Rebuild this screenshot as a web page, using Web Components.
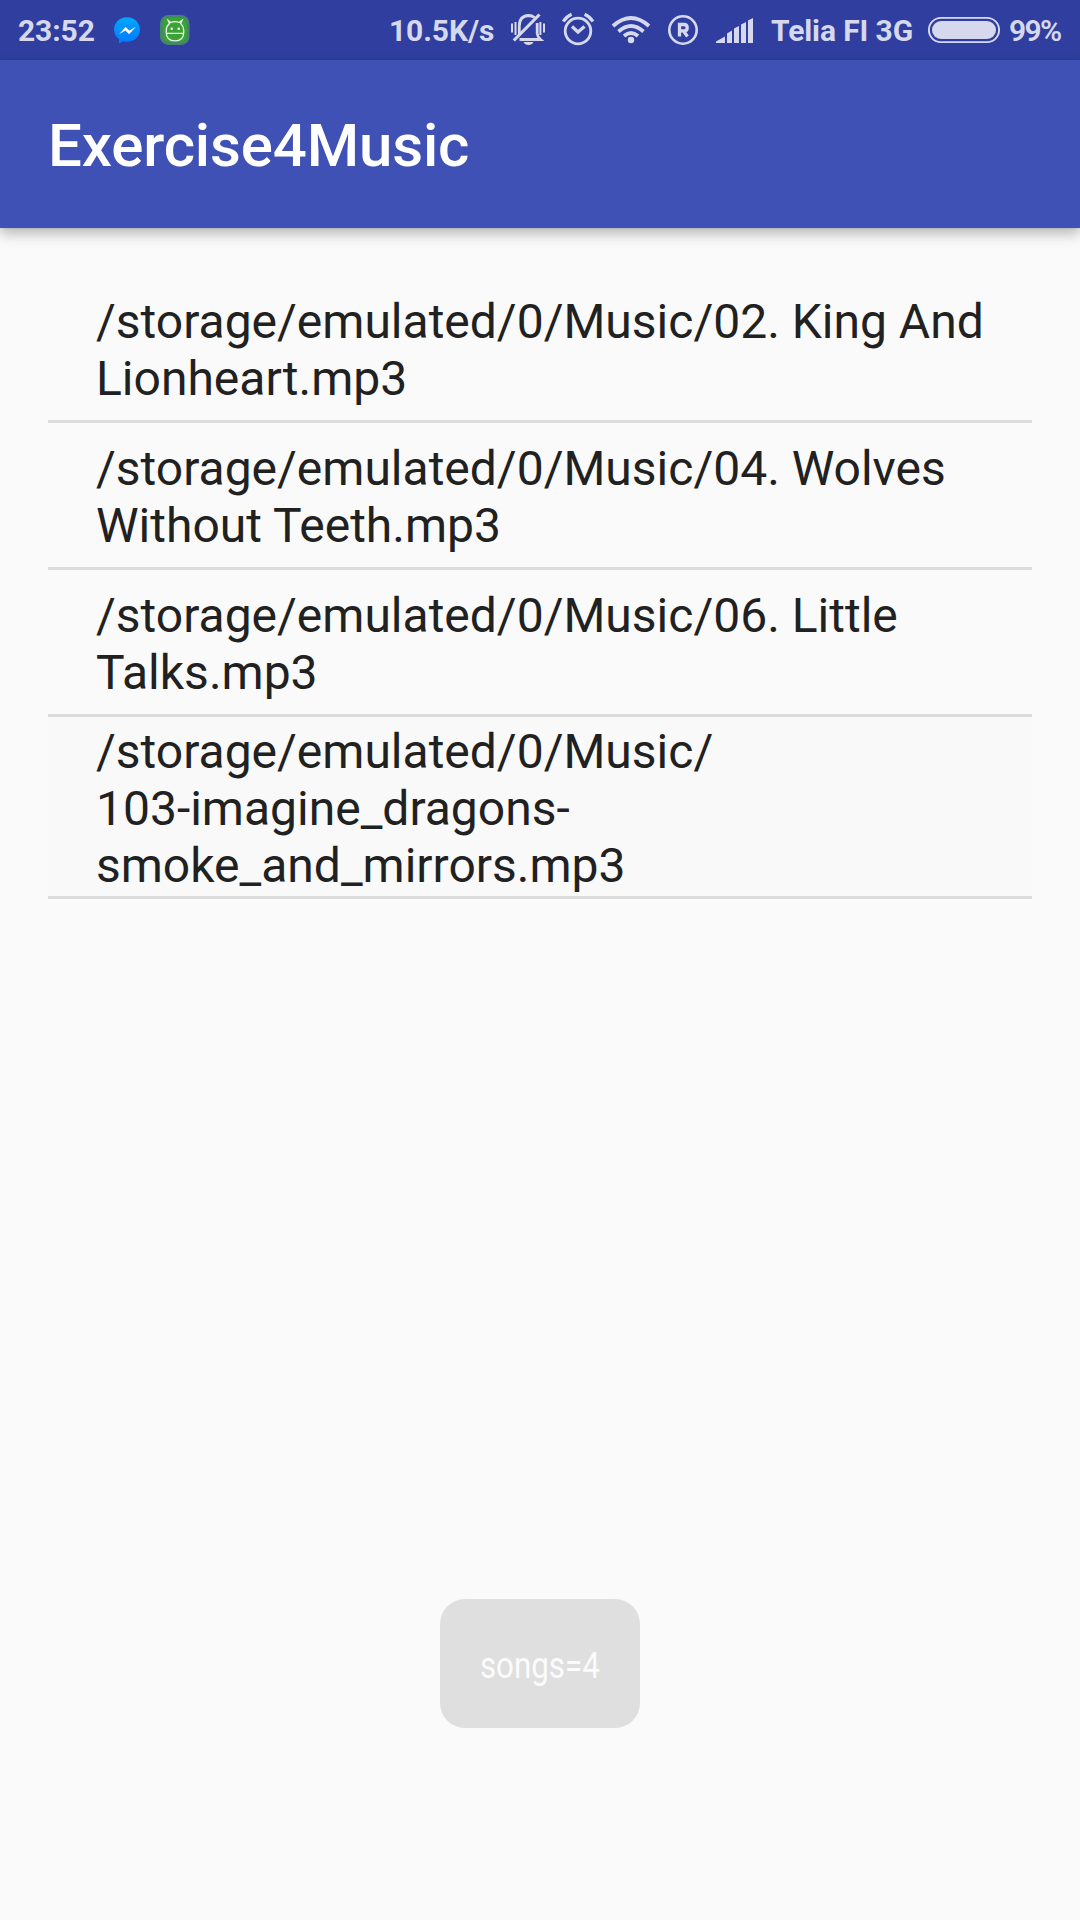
<!DOCTYPE html>
<html lang="en">
<head>
<meta charset="utf-8">
<title>Exercise4Music</title>
<style>
html,body{margin:0;height:100%;background:#fafafa;font-family:Roboto,"Liberation Sans",sans-serif}
</style>
</head>
<body>
<music-app></music-app>
<script>
const define = (name, html) => {
  const t = document.createElement('template');
  t.innerHTML = html;
  customElements.define(name, class extends HTMLElement {
    constructor() {
      super();
      this.attachShadow({mode: 'open'}).append(t.content.cloneNode(true));
    }
  });
};

define('status-text', `<style>
:host{display:block;flex:none;padding-top:1px;font-size:30px;line-height:36px;font-weight:700;letter-spacing:-.1px;white-space:nowrap;color:#d6d9ee}
</style><slot></slot>`);

define('status-icon', `<style>
:host{display:block;flex:none;height:60px;color:#d6d9ee}
::slotted(svg){display:block;height:60px}
</style><slot></slot>`);

define('status-bar', `<style>
:host{display:flex;height:60px;background:#303f9f;align-items:center;box-sizing:border-box;overflow:hidden}
.w1{width:94px;margin-left:18px}.w2{width:107px;margin-left:auto}.w3{width:155px}.w4{width:71px;font-weight:600;letter-spacing:-1.7px}
</style>
<status-text class="w1">23:52</status-text>
<status-icon><svg width="48" height="60" viewBox="112 0 48 60">
 <defs><linearGradient id="m" x1="0" y1="0" x2="0" y2="1"><stop offset="0" stop-color="#00a8ff"/><stop offset="1" stop-color="#0078ff"/></linearGradient></defs>
 <path d="M127 17.300c-7.300 0-13 5.400-13 12.300 0 4 1.900 7.300 5 9.600v4.400l4-2.300c1.300.4 2.600.5 4 .5 7.300 0 13-5.300 13-12.200s-5.700-12.300-13-12.300z" fill="url(#m)"/>
 <path d="M119 34.200l6.600-7.200 3.700 3.600 6.700-3.900-6.900 7.500-3.600-3.800z" fill="#fff"/></svg></status-icon>
<status-icon><svg width="30" height="60" viewBox="160 0 30 60">
 <rect x="160" y="15" width="29.500" height="30" rx="8.500" fill="#43876a"/>
 <rect x="163" y="18" width="23.500" height="24" rx="6" fill="#3ba336"/>
 <path d="M169.500 23.500l-1.300-3 2.600 2q4.200-1.600 8.400 0l2.800-2-1.300 3q3 2.800 3 6.500v2.500q0 8.300-8.700 8.300t-8.700-8.300v-2.500q0-3.700 3.200-6.500zM166.300 33.300h17.400" fill="none" stroke="#e6f5e4" stroke-width="1.300"/>
 <circle cx="171.700" cy="28.800" r="1.200" fill="#fff"/><circle cx="178.700" cy="28.800" r="1.200" fill="#fff"/></svg></status-icon>
<status-text class="w2">10.5K/s</status-text>
<status-icon><svg width="275" height="60" viewBox="496 0 275 60">
 <g fill="none" stroke="currentColor" stroke-width="2.800">
  <path d="M512 23.500v9M515.500 22v13M544 23.500v9M540.400 22v13" stroke-width="2"/>
  <path d="M519.300 34.500v-8.500q0-10 9.200-10.500 3.500 0 6 2M537.200 23v10.500q.3 3.500 3.300 6h-21"/>
  <path d="M513.800 40.500l25.700-26" stroke-width="3.200"/><path d="M523.500 42h10q-1.500 3-5 3t-5-3z" fill="currentColor" stroke="none"/>
 </g>
 <g fill="none" stroke="currentColor" stroke-width="2.800"><circle cx="578" cy="31" r="12.800"/><path d="M572 26.500l6 5.500 6.500-5.500" stroke-width="3.200"/><path d="M563.300 21.500q3-5 8.300-7.300M592.900 21.500q-3-5-8.300-7.300" stroke-width="3.200"/></g>
 <g fill="none" stroke="currentColor" stroke-width="3.800"><path d="M613 26q18-16 36 0M618.500 31.500q12.500-11 25 0M624 36q7-6 14 0"/><circle cx="631" cy="40" r="3.200" fill="currentColor" stroke="none"/></g>
 <circle cx="683" cy="30" r="13.700" fill="none" stroke="currentColor" stroke-width="2.600"/>
 <path d="M679.500 36.500v-12h4.500q3.200 0 3.200 3.200t-3.200 3.200h-4.500M683.500 31l4 5.500" fill="none" stroke="currentColor" stroke-width="3.300"/>
 <g fill="currentColor"><path d="M716 43v-1.500l9-5V43zM727 43V33.500l5-3V43zM734 43V28.500l5-2.500v17zM741 43V24.500l5-2.500v21zM748 43V20.500l5-2.500v25z"/></g>
</svg></status-icon>
<status-text class="w3">Telia FI 3G</status-text>
<status-icon><svg width="83" height="60" viewBox="926 0 83 60"><rect x="928.900" y="17.900" width="70.200" height="24.200" rx="12.100" fill="none" stroke="currentColor" stroke-width="1.900"/><rect x="932" y="21" width="64" height="18" rx="9" fill="currentColor"/></svg></status-icon>
<status-text class="w4">99%</status-text>`);

define('app-bar', `<style>
:host{display:flex;align-items:center;position:relative;height:168px;box-sizing:border-box;padding:4px 48px 0;background:#3f51b5;color:#fff;
box-shadow:0 6px 12px rgba(0,0,0,.26),0 0 3px rgba(0,0,0,.12)}
h1{margin:0;font-size:60px;line-height:70px;font-weight:500;letter-spacing:-.15px;white-space:nowrap}
</style><h1><slot></slot></h1>`);

define('song-item', `<style>
:host{display:flex;align-items:center;height:147px;padding:4px 48px 0;box-sizing:border-box;border-bottom:3px solid #dcdcdc;font-size:48px;line-height:57px;color:#212121}
:host([pressed]){background:#f9f9f9;height:182px}
</style><div><slot></slot></div>`);

define('song-list', `<style>
:host{display:flex;flex-direction:column;padding:48px 48px 0}
</style><slot></slot>`);

define('toast-message', `<style>
:host{position:absolute;left:50%;top:1599px;transform:translateX(-50%);width:200px;height:129px;box-sizing:border-box;padding-top:5px;border-radius:25px;background:#dfdfdf;display:flex;align-items:center;justify-content:center;color:#fbfbfb;font-size:36px;line-height:42px;white-space:nowrap}
span{display:block;transform:scaleX(.87)}
</style><span><slot></slot></span>`);

define('music-app', `<style>
:host{display:flex;flex-direction:column;width:1080px;height:1920px;position:relative;overflow:hidden;background:#fafafa}
</style>
<status-bar></status-bar>
<app-bar>Exercise4Music</app-bar>
<song-list>
<song-item>/storage/emulated/0/Music/02. King And<br>Lionheart.mp3</song-item>
<song-item>/storage/emulated/0/Music/04. Wolves<br>Without Teeth.mp3</song-item>
<song-item>/storage/emulated/0/Music/06. Little<br>Talks.mp3</song-item>
<song-item pressed>/storage/emulated/0/Music/<br>103-imagine_dragons-<br>smoke_and_mirrors.mp3</song-item>
</song-list>
<toast-message>songs=4</toast-message>`);
</script>
</body>
</html>
